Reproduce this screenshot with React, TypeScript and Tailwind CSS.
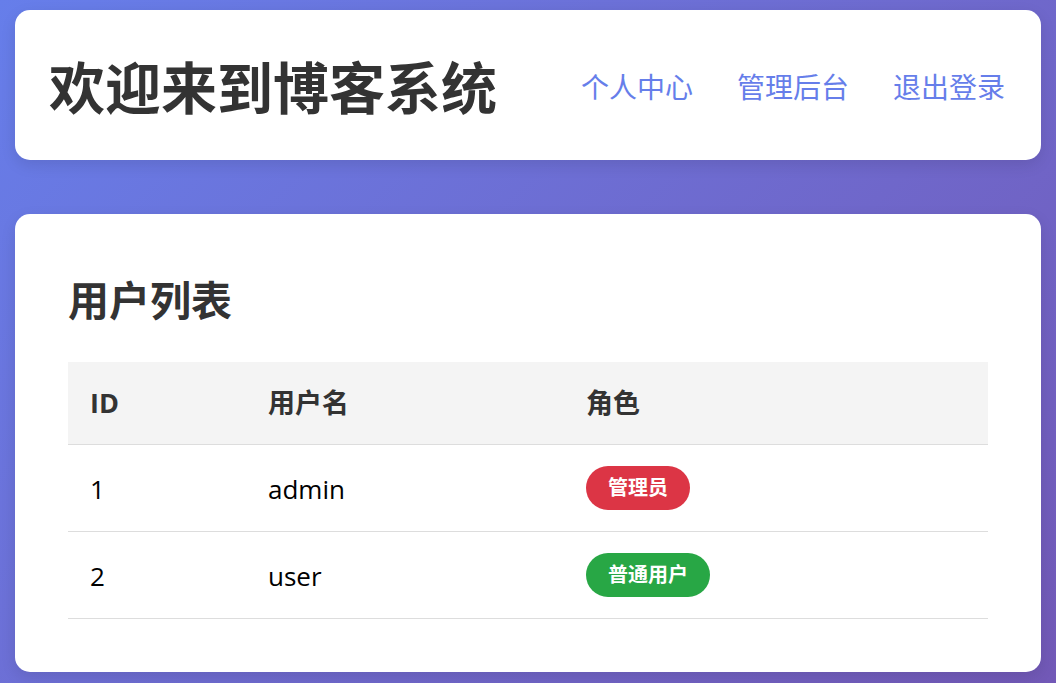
const users = [
  { id: 1, name: 'admin', role: 'admin' },
  { id: 2, name: 'user', role: 'user' },
];

const RoleBadge = ({ role }: { role: string }) =>
  role === 'admin' ? (
    <span className="inline-flex h-[44px] items-center rounded-full bg-[#dc3545] px-[22px] text-[20px] font-bold text-white">
      管理员
    </span>
  ) : (
    <span className="inline-flex h-[44px] items-center rounded-full bg-[#28a745] px-[22px] text-[20px] font-bold text-white">
      普通用户
    </span>
  );

const App = () => {
  return (
    <div className="min-h-screen bg-linear-135 from-[#667eea] to-[#7258b6] px-[15px] pt-[10px] pb-[40px] font-['Open_Sans','Noto_Sans_CJK_SC',sans-serif]">
      <header className="flex h-[150px] items-center justify-between rounded-[15px] bg-white pt-[4px] pl-[34px] pr-[36px] shadow-[0_5px_15px_rgba(0,0,0,0.1)]">
        <h1 className="text-[56px] font-bold text-[#333]">欢迎来到博客系统</h1>
        <nav className="flex gap-[44px] text-[28px] text-[#667eea]">
          <a href="#">个人中心</a>
          <a href="#">管理后台</a>
          <a href="#">退出登录</a>
        </nav>
      </header>

      <main className="mt-[54px] rounded-[15px] bg-white px-[53px] pt-[53px] pb-[53px] shadow-[0_5px_15px_rgba(0,0,0,0.1)]">
        <h2 className="mb-[29px] text-[41px] leading-[66px] font-bold text-[#333]">用户列表</h2>
        <table className="w-full border-collapse text-left">
          <thead>
            <tr className="h-[82px] border-b border-[#ddd] bg-[#f4f4f4] text-[27px] font-bold text-[#333]">
              <th className="w-[178px] pl-[22px]">ID</th>
              <th className="w-[318px] pl-[22px]">用户名</th>
              <th className="pl-[22px]">角色</th>
            </tr>
          </thead>
          <tbody className="text-[26px] text-black">
            {users.map((u) => (
              <tr key={u.id} className="h-[87px] border-b border-[#ddd]">
                <td className="pt-[3px] pl-[22px]">{u.id}</td>
                <td className="pt-[3px] pl-[22px]">{u.name}</td>
                <td className="pl-[22px]">
                  <RoleBadge role={u.role} />
                </td>
              </tr>
            ))}
          </tbody>
        </table>
      </main>
    </div>
  );
};

export default App;
